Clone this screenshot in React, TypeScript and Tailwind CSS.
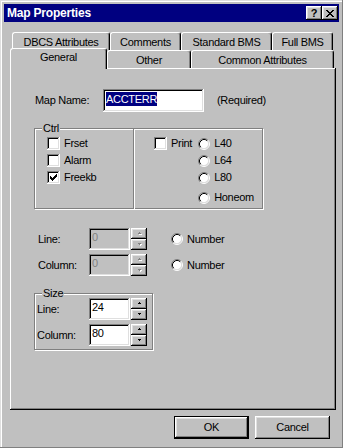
import React from "react";

const raised =
  "shadow-[inset_-1px_-1px_#000,inset_1px_1px_#fff,inset_-2px_-2px_#808080,inset_2px_2px_#dfdfdf]";
const sunken =
  "shadow-[inset_-1px_-1px_#fff,inset_1px_1px_#808080,inset_-2px_-2px_#dfdfdf,inset_2px_2px_#000]";
const etched = "border border-[#808080] shadow-[1px_1px_#fff,inset_1px_1px_#fff]";

function CapBtn({ children }: { children: React.ReactNode }) {
  return (
    <div className={`w-[16px] h-[14px] bg-[#c0c0c0] ${raised} flex items-center justify-center text-black`}>
      {children}
    </div>
  );
}

function CloseGlyph() {
  return (
    <svg width="8" height="7" viewBox="0 0 8 7" shapeRendering="crispEdges" className="mt-[0px]">
      <path
        fill="#000"
        d="M0 0h2v1h-2z M6 0h2v1h-2z M1 1h2v1h-2z M5 1h2v1h-2z M2 2h4v1h-4z M3 3h2v1h-2z M2 4h4v1h-4z M1 5h2v1h-2z M5 5h2v1h-2z M0 6h2v1h-2z M6 6h2v1h-2z"
      />
    </svg>
  );
}

function Tab({
  className,
  selected,
  children,
}: {
  className: string;
  selected?: boolean;
  children: React.ReactNode;
}) {
  return (
    <div
      className={`${className} ${
        selected ? "h-[21px] -mt-[2px] relative z-10 pb-[3px]" : "h-[18px] pt-[1px]"
      } shrink-0 bg-[#c0c0c0] border-t border-l border-r border-t-white border-l-white border-r-black rounded-t-[3px] shadow-[inset_-1px_0_#808080] flex items-center justify-center whitespace-nowrap`}
    >
      {children}
    </div>
  );
}

function Check({ checked }: { checked?: boolean }) {
  return (
    <div className={`w-[13px] h-[13px] bg-white ${sunken} flex items-center justify-center shrink-0`}>
      {checked && (
        <svg width="7" height="7" viewBox="0 0 7 7" shapeRendering="crispEdges">
          <path
            fill="#000"
            d="M6 0h1v1h-1z M5 1h2v1h-2z M0 2h1v1h-1z M4 2h3v1h-3z M0 3h2v1h-2z M3 3h3v1h-3z M0 4h5v1h-5z M1 5h3v1h-3z M2 6h1v1h-1z"
          />
        </svg>
      )}
    </div>
  );
}

function Radio() {
  return (
    <svg width="12" height="12" viewBox="0 0 12 12" className="shrink-0">
      <circle cx="6" cy="6" r="4.5" fill="#fff" />
      <path d="M2.11 9.89 A5.5 5.5 0 0 1 9.89 2.11" stroke="#808080" fill="none" strokeWidth="1" />
      <path d="M9.89 2.11 A5.5 5.5 0 0 1 2.11 9.89" stroke="#fff" fill="none" strokeWidth="1" />
      <path d="M2.82 9.18 A4.5 4.5 0 0 1 9.18 2.82" stroke="#000" fill="none" strokeWidth="1" />
      <path d="M9.18 2.82 A4.5 4.5 0 0 1 2.82 9.18" stroke="#dfdfdf" fill="none" strokeWidth="1" />
    </svg>
  );
}

function CheckRow({ label, checked }: { label: string; checked?: boolean }) {
  return (
    <div className="h-[17px] flex items-center gap-[4px]">
      <Check checked={checked} />
      <span>{label}</span>
    </div>
  );
}

function RadioRow({ label, className }: { label: string; className?: string }) {
  return (
    <div className={`h-[17px] flex items-center gap-[4px] ${className ?? ""}`}>
      <Radio />
      <span>{label}</span>
    </div>
  );
}

function Arrow({ up, disabled }: { up?: boolean; disabled?: boolean }) {
  const d = up ? "M1 0h1v1h-1z M0 1h3v1h-3z" : "M0 0h3v1h-3z M1 1h1v1h-1z";
  return (
    <svg width="4" height="3" viewBox="0 0 4 3" shapeRendering="crispEdges">
      {disabled && <path d={d} fill="#fff" transform="translate(1 1)" />}
      <path d={d} fill={disabled ? "#808080" : "#000"} />
    </svg>
  );
}

function Spinner({ disabled }: { disabled?: boolean }) {
  return (
    <div className="ml-[1px] flex flex-col w-[16px] h-[22px]">
      <div className={`h-[11px] w-[16px] bg-[#c0c0c0] ${raised} flex items-center justify-center pl-[1px]`}>
        <Arrow up disabled={disabled} />
      </div>
      <div className={`h-[11px] w-[16px] bg-[#c0c0c0] ${raised} flex items-center justify-center pl-[1px]`}>
        <Arrow disabled={disabled} />
      </div>
    </div>
  );
}

function SpinRow({
  label,
  labelW,
  value,
  disabled,
  radio,
}: {
  label: string;
  labelW: string;
  value: string;
  disabled?: boolean;
  radio?: boolean;
}) {
  return (
    <div className="h-[22px] flex items-center">
      <span className={labelW}>{label}</span>
      <div
        className={`w-[41px] h-[22px] ${
          disabled ? "bg-[#c0c0c0] text-[#808080]" : "bg-white text-black"
        } ${sunken} pt-[3px] pl-[3px]`}
      >
        {value}
      </div>
      <Spinner disabled={disabled} />
      {radio && (
        <div className="ml-[24px] flex items-center gap-[4px]">
          <Radio />
          <span>Number</span>
        </div>
      )}
    </div>
  );
}

function Button({ children, isDefault }: { children: React.ReactNode; isDefault?: boolean }) {
  if (isDefault) {
    return (
      <div className="w-[75px] h-[23px] border border-black">
        <div className={`w-full h-full ${raised} flex items-center justify-center`}>{children}</div>
      </div>
    );
  }
  return <div className={`w-[75px] h-[23px] ${raised} flex items-center justify-center`}>{children}</div>;
}

export default function App() {
  return (
    <div className="w-[343px] h-[448px] bg-[#c0c0c0] font-['Liberation_Sans',Arial,sans-serif] text-[11px] tracking-[-0.3px] leading-[13px] text-black shadow-[inset_-1px_-1px_#808080,inset_1px_1px_#dfdfdf,inset_2px_2px_#fff] pt-[4px] px-[4px] flex flex-col overflow-hidden">
      {/* Title bar */}
      <div className="h-[18px] bg-[#000080] flex items-center pl-[3px] pr-[1px]">
        <span className="text-white font-bold text-[12px] tracking-[-0.2px] leading-[14px]">Map Properties</span>
        <div className="ml-auto flex">
          <CapBtn>
            <span className="font-bold text-[11px] leading-none tracking-normal">?</span>
          </CapBtn>
          <CapBtn>
            <CloseGlyph />
          </CapBtn>
        </div>
      </div>

      {/* Tabs + panel */}
      <div className="mt-[10px] ml-[6px] w-[326px] flex flex-col">
        <div className="flex pl-[2px] h-[18px]">
          <Tab className="w-[98px]">DBCS Attributes</Tab>
          <Tab className="w-[71px]">Comments</Tab>
          <Tab className="w-[91px]">Standard BMS</Tab>
          <Tab className="w-[61px]">Full BMS</Tab>
        </div>
        <div className="flex items-start h-[18px]">
          <Tab selected className="w-[97px]">
            General
          </Tab>
          <Tab className="w-[84px]">Other</Tab>
          <Tab className="w-[143px]">Common Attributes</Tab>
        </div>

        <div className="w-[326px] h-[342px] shadow-[inset_-1px_-1px_#000,inset_1px_1px_#fff,inset_-2px_-2px_#808080] flex flex-col pl-[24px]">
          {/* Map Name */}
          <div className="mt-[21px] h-[23px] flex items-center pl-[1px]">
            <span className="w-[68px]">Map Name:</span>
            <div className={`w-[101px] h-[23px] bg-white ${sunken} flex items-start pt-[3px] pl-[3px]`}>
              <span className="bg-[#000080] text-white leading-[14px] h-[14px]">ACCTERR</span>
            </div>
            <span className="ml-[13px]">(Required)</span>
          </div>

          {/* Ctrl group */}
          <div className="mt-[16px] flex">
            <div className={`relative w-[100px] h-[81px] ${etched} pt-[6px] pl-[12px] flex flex-col`}>
              <span className="absolute -top-[7px] left-[7px] px-[1px] bg-[#c0c0c0]">Ctrl</span>
              <CheckRow label="Frset" />
              <CheckRow label="Alarm" />
              <CheckRow label="Freekb" checked />
            </div>
            <div className={`w-[130px] h-[81px] -ml-[1px] ${etched} pt-[6px] pl-[20px] flex`}>
              <div className="h-[17px] flex items-center gap-[4px]">
                <Check />
                <span>Print</span>
              </div>
              <div className="ml-[6px] flex flex-col">
                <RadioRow label="L40" />
                <RadioRow label="L64" />
                <RadioRow label="L80" />
                <RadioRow label="Honeom" className="mt-[3px]" />
              </div>
            </div>
          </div>

          {/* Disabled line/column */}
          <div className="mt-[19px] flex flex-col gap-[4px] pl-[4px]">
            <SpinRow label="Line:" labelW="w-[51px]" value="0" disabled radio />
            <SpinRow label="Column:" labelW="w-[51px]" value="0" disabled radio />
          </div>

          {/* Size group */}
          <div className={`mt-[17px] relative w-[119px] h-[57px] ${etched} pt-[4px] pl-[2px] flex flex-col gap-[4px]`}>
            <span className="absolute -top-[7px] left-[7px] px-[1px] bg-[#c0c0c0]">Size</span>
            <SpinRow label="Line:" labelW="w-[52px]" value="24" />
            <SpinRow label="Column:" labelW="w-[52px]" value="80" />
          </div>
        </div>
      </div>

      {/* Buttons */}
      <div className="mt-[6px] flex justify-end gap-[6px] pr-[9px]">
        <Button isDefault>OK</Button>
        <Button>Cancel</Button>
      </div>
    </div>
  );
}
